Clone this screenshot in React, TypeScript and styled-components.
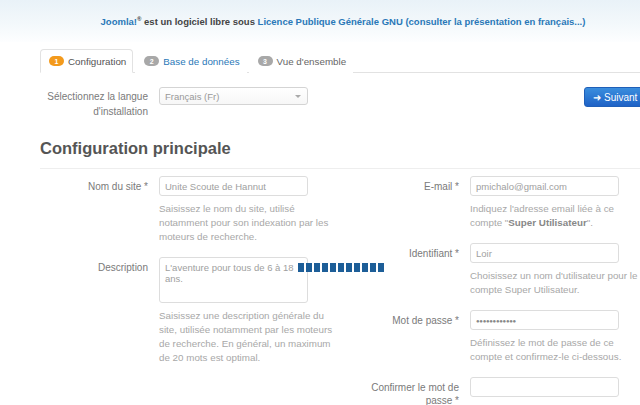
import React from 'react';
import styled, {createGlobalStyle} from 'styled-components';

const GlobalStyle = createGlobalStyle`
  html, body { margin: 0; padding: 0; background: #fff; overflow: hidden; }
  body { font-family: "Liberation Sans", Arial, Helvetica, sans-serif; color: #555; }
  * { box-sizing: border-box; }
`;

const Page = styled.div`
  width: 686px; height: 405px; overflow: hidden;
`;

const TopBar = styled.div`
  height: 42px; display: flex; align-items: center; justify-content: center;
  background: linear-gradient(180deg, #e9f2f8 0%, #f3f8fb 55%, #fdfeff 100%);
  font-size: 9.5px; font-weight: bold; color: #444;
  padding-top: 1px;
  a { color: #2a78b8; text-decoration: none; }
  sup { font-size: 6px; vertical-align: 4px; }
`;

const Container = styled.div`
  margin: 0 40px;
`;

const Tabs = styled.ul`
  list-style: none; margin: 7px 0 0; padding: 0;
  display: flex; border-bottom: 1px solid #e2e2e2; height: 24px;
`;

const Tab = styled.li<{ $active?: boolean }>`
  display: flex; align-items: center; gap: 4px;
  height: 24px; padding: 0 6px 0 8px; margin-right: 2px;
  font-size: 9.8px; color: ${p => (p.$active ? '#555' : '#666')};
  border: 1px solid ${p => (p.$active ? '#e2e2e2' : 'transparent')};
  border-bottom-color: ${p => (p.$active ? '#fff' : 'transparent')};
  border-radius: 4px 4px 0 0; background: #fff;
  a { color: #2a78b8; text-decoration: none; }
`;

const Badge = styled.span<{ $tone: 'orange' | 'grey' }>`
  display: inline-flex; align-items: center; justify-content: center;
  width: 15px; height: 10px; border-radius: 6px; font-size: 7px; font-weight: bold;
  color: #fff; background: ${p => (p.$tone === 'orange' ? '#f39a1c' : '#a8a8a8')};
`;

const TopRow = styled.div`
  display: flex; justify-content: space-between; align-items: flex-start;
  margin-top: 14px;
`;

const Row = styled.div<{ $mb?: number }>`
  display: grid; grid-template-columns: 108px 1fr; column-gap: 11px;
  margin-bottom: ${p => p.$mb ?? 13}px;
`;

const Label = styled.div<{ $lh?: number; $pt?: number }>`
  text-align: right; font-size: 10px; color: #7a7a7a;
  line-height: ${p => p.$lh ?? 13}px; padding-top: ${p => p.$pt ?? 3.5}px;
`;

const Control = styled.div`
  position: relative;
`;

const Select = styled.div`
  width: 149px; height: 18px; border: 1px solid #d4d4d4; border-radius: 3px;
  background: linear-gradient(#fff, #f7f7f7);
  display: flex; align-items: center; justify-content: space-between;
  padding: 0 6px 0 5px; font-size: 9.5px; color: #999;
  &::after { content: ''; border: 3px solid transparent; border-top: 3px solid #aaa; margin-top: 3px; }
`;

const Button = styled.button`
  width: 62px; height: 20px; border: 1px solid #1f5fb8; border-radius: 3px;
  background: linear-gradient(#3a8ede, #1e62c6); color: #fff;
  font-family: inherit; font-size: 10px; display: flex; align-items: center;
  justify-content: flex-start; gap: 3px; padding: 0 0 0 8px; cursor: pointer;
`;

const Heading = styled.h2`
  margin: 18px 0 0; padding-bottom: 9px; border-bottom: 1px solid #eee;
  font-size: 16.5px; font-weight: bold; color: #555; line-height: 22px;
`;

const Columns = styled.div`
  display: grid; grid-template-columns: 311px 1fr; margin-top: 7px;
`;

const Input = styled.div<{ $w?: number; $h?: number }>`
  width: ${p => p.$w ?? 149}px; height: ${p => p.$h ?? 20}px;
  border: 1px solid #ddd; border-radius: 3px; background: #fff;
  font-size: 9.5px; color: #a0a0a0; padding: 4px 5px; line-height: 11px;
`;

const Dots = styled.span`
  font-size: 6px; letter-spacing: -0.3px; color: #888; vertical-align: 1px;
`;

const Help = styled.p`
  margin: 6px 0 0; white-space: nowrap;
  font-size: 9.8px; line-height: 14px; color: #a8a8a8;
  b { color: #888; line-height: 0; }
`;

const Loader = styled.div`
  position: absolute; left: 139px; top: 6px; display: flex; gap: 2px;
  span { width: 6px; height: 9px; background: #1d5e98; }
`;

const Field = ({label, children, help}: {
  label: React.ReactNode; children?: React.ReactNode; help?: React.ReactNode[];
}) => (
  <Row>
    <Label>{label}</Label>
    <Control>
      {children}
      {help && (
        <Help>
          {help.map((line, i) => (
            <React.Fragment key={i}>{i > 0 && <br />}{line}</React.Fragment>
          ))}
        </Help>
      )}
    </Control>
  </Row>
);

const App = () => (
  <Page>
    <GlobalStyle />
    <TopBar>
      <span>
        <a href="#">Joomla!</a><sup>®</sup> est un logiciel libre sous <a href="#">Licence Publique Générale GNU (consulter la présentation en français...)</a>
      </span>
    </TopBar>
    <Container>
      <Tabs>
        <Tab $active><Badge $tone="orange">1</Badge>Configuration</Tab>
        <Tab><Badge $tone="grey">2</Badge><a href="#">Base de données</a></Tab>
        <Tab><Badge $tone="grey">3</Badge>Vue d'ensemble</Tab>
      </Tabs>
      <TopRow>
        <Row $mb={0}>
          <Label $lh={15} $pt={2}>Sélectionnez la langue<br />d'installation</Label>
          <Control><Select>Français (Fr)</Select></Control>
        </Row>
        <Button><span>➜</span>Suivant</Button>
      </TopRow>
      <Heading>Configuration principale</Heading>
      <Columns>
        <div>
          <Field
            label="Nom du site *"
            help={['Saisissez le nom du site, utilisé', 'notamment pour son indexation par les', 'moteurs de recherche.']}
          >
            <Input>Unite Scoute de Hannut</Input>
          </Field>
          <Field
            label="Description"
            help={['Saisissez une description générale du', 'site, utilisée notamment par les moteurs', 'de recherche. En général, un maximum', 'de 20 mots est optimal.']}
          >
            <Input $h={46}>L'aventure pour tous de 6 à 18<br />ans.</Input>
            <Loader>
              {Array.from({length: 11}).map((_, i) => <span key={i} />)}
            </Loader>
          </Field>
        </div>
        <div>
          <Field
            label="E-mail *"
            help={["Indiquez l'adresse email liée à ce", <>compte "<b>Super Utilisateur</b>".</>]}
          >
            <Input>pmichalo@gmail.com</Input>
          </Field>
          <Field
            label="Identifiant *"
            help={["Choisissez un nom d'utilisateur pour le", 'compte Super Utilisateur.']}
          >
            <Input>Loir</Input>
          </Field>
          <Field
            label="Mot de passe *"
            help={['Définissez le mot de passe de ce', 'compte et confirmez-le ci-dessous.']}
          >
            <Input><Dots>●●●●●●●●●●●●</Dots></Input>
          </Field>
          <Field label={<>Confirmer le mot de<br />passe *</>}>
            <Input />
          </Field>
        </div>
      </Columns>
    </Container>
  </Page>
);

export default App;
